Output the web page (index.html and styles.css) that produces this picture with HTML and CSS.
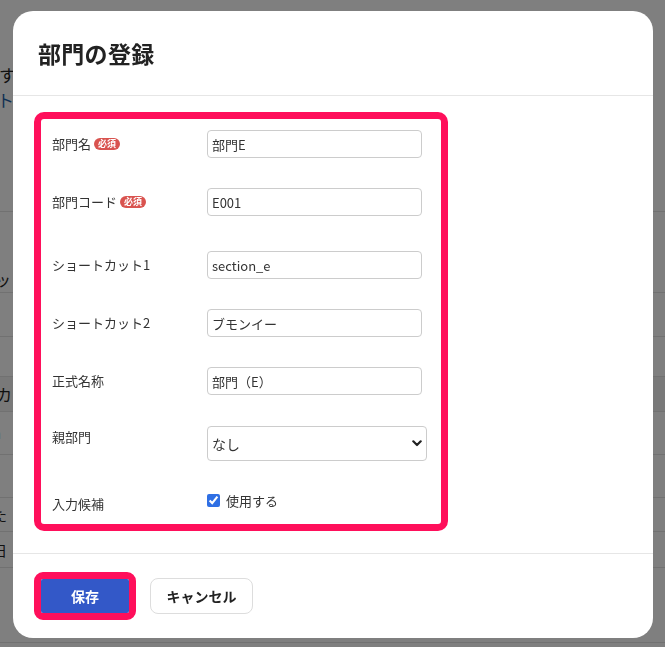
FILE: index.html
```html
<!DOCTYPE html>
<html lang="ja">
<head>
<meta charset="utf-8">
<title>部門の登録</title>
<link rel="stylesheet" href="styles.css">
</head>
<body>
<div class="page">
  <div class="pg-top">
    <p class="pg-text pg-t1">す</p>
    <p class="pg-text pg-link">ト</p>
  </div>
  <div class="pg-row pg-r1"><span class="pg-cell">ット</span></div>
  <div class="pg-row pg-r2"></div>
  <div class="pg-row pg-r3"></div>
  <div class="pg-row pg-head"><span class="pg-cell">カ</span></div>
  <div class="pg-row pg-r4"><span class="pg-cell pg-small">a</span></div>
  <div class="pg-row pg-r5"></div>
  <div class="pg-row pg-r6"><span class="pg-cell pg-small">た</span></div>
  <div class="pg-row pg-r7"><span class="pg-cell pg-small">日</span></div>
  <div class="pg-row pg-r8"></div>
</div>

<div class="overlay">
  <div class="modal">
    <div class="modal-header">
      <h1 class="modal-title">部門の登録</h1>
    </div>
    <div class="modal-body">
      <div class="highlight">
        <div class="row row-1">
          <div class="label">部門名<span class="badge">必須</span></div>
          <input class="input" type="text" value="部門E">
        </div>
        <div class="row row-2">
          <div class="label">部門コード<span class="badge">必須</span></div>
          <input class="input" type="text" value="E001">
        </div>
        <div class="row row-3">
          <div class="label">ショートカット1</div>
          <input class="input" type="text" value="section_e">
        </div>
        <div class="row row-4">
          <div class="label">ショートカット2</div>
          <input class="input" type="text" value="ブモンイー">
        </div>
        <div class="row row-5">
          <div class="label">正式名称</div>
          <input class="input" type="text" value="部門（E）">
        </div>
        <div class="row row-select">
          <div class="label label-select">親部門</div>
          <div class="select-wrap">
            <select class="select">
              <option>なし</option>
            </select>
            <svg class="chevron" width="10" height="7" viewBox="0 0 10 7" aria-hidden="true">
              <path d="M1.3 1.3 L5 5 L8.7 1.3" fill="none" stroke="#222" stroke-width="2.2" stroke-linecap="round" stroke-linejoin="round"/>
            </svg>
          </div>
        </div>
        <div class="row row-check">
          <div class="label label-check">入力候補</div>
          <label class="check">
            <input class="checkbox" type="checkbox" checked>
            <span>使用する</span>
          </label>
        </div>
      </div>
    </div>
    <div class="modal-footer">
      <div class="save-ring">
        <button class="btn-save" type="button">保存</button>
      </div>
      <button class="btn-cancel" type="button">キャンセル</button>
    </div>
  </div>
</div>
</body>
</html>
```

FILE: styles.css
```css
* {
  box-sizing: border-box;
}

html, body {
  margin: 0;
  padding: 0;
  background: #ffffff;
  font-family: "Noto Sans CJK JP", "Noto Sans", "Liberation Sans", sans-serif;
  color: #333333;
}

/* ---------- page behind the overlay ---------- */
.page {
  width: 665px;
  height: 647px;
  overflow: hidden;
}

.pg-top {
  height: 212px;
  padding-top: 62px;
  border-bottom: 1px solid #e2e2e2;
}

.pg-text {
  margin: 0;
  font-size: 17px;
  line-height: 25px;
  margin-left: -1px;
  color: #222222;
}

.pg-link {
  color: #1d5fa8;
  margin-left: -3px;
}

.pg-row {
  border-bottom: 1px solid #e2e2e2;
  display: flex;
  align-items: flex-end;
}

.pg-cell {
  font-size: 16px;
  line-height: 22px;
  color: #222222;
  margin-left: -5px;
}

.pg-small {
  font-size: 14px;
  margin-left: -7px;
  align-self: center;
}

.pg-r1 { height: 81px; padding-bottom: 2px; }
.pg-r2 { height: 44px; }
.pg-r3 { height: 40px; }
.pg-head { height: 35px; background: #f2f2f2; align-items: center; }
.pg-head .pg-cell { margin-left: -4px; }
.pg-r4 { height: 43px; }
.pg-r5 { height: 43px; }
.pg-r6 { height: 34px; }
.pg-r7 { height: 36px; }
.pg-r8 { height: 75px; }

/* ---------- overlay + modal ---------- */
.overlay {
  position: fixed;
  inset: 0;
  background: rgba(0, 0, 0, 0.5);
  padding: 11px 12px 9px 13px;
  display: flex;
}

.modal {
  flex: 1;
  background: #ffffff;
  border-radius: 20px;
  display: flex;
  flex-direction: column;
  overflow: hidden;
}

.modal-header {
  height: 85px;
  padding-left: 25px;
  display: flex;
  align-items: center;
  border-bottom: 1px solid #e6e6e6;
}

.modal-title {
  margin: 0;
  font-size: 23px;
  font-weight: 700;
  color: #222222;
  letter-spacing: 0.3px;
  line-height: 32px;
}

.modal-body {
  padding: 16px 0 22px 21px;
  border-bottom: 1px solid #e6e6e6;
}

.highlight {
  width: 414px;
  border: 7px solid #ff0f5b;
  border-radius: 10px;
  padding: 11px 15px 10px 11px;
}

.row {
  display: flex;
  align-items: center;
}

.row-1 { margin-top: 0; }
.row-2 { margin-top: 30px; }
.row-3 { margin-top: 35px; }
.row-4 { margin-top: 30px; }
.row-5 { margin-top: 30px; }
.row-select { margin-top: 31px; align-items: flex-start; }
.row-check { margin-top: 29px; align-items: flex-start; }

.label {
  width: 155px;
  flex: none;
  font-size: 13px;
  line-height: 20px;
  color: #333333;
  display: flex;
  align-items: center;
}

.label-select {
  margin-top: 1px;
}

.label-check {
  margin-top: 4px;
}

.badge {
  display: inline-block;
  margin-left: 3px;
  height: 12px;
  padding: 0 4px;
  border-radius: 6px;
  background: #d9534f;
  color: #ffffff;
  font-size: 9px;
  font-weight: 700;
  line-height: 12px;
}

.input {
  width: 215px;
  height: 28px;
  margin: 0;
  border: 1px solid #cccccc;
  border-radius: 4px;
  padding: 0 4px;
  font-family: inherit;
  font-size: 13px;
  color: #333333;
  background: #ffffff;
  outline: none;
}

.select-wrap {
  position: relative;
  width: 220px;
  height: 35px;
}

.select {
  appearance: none;
  -webkit-appearance: none;
  width: 220px;
  height: 35px;
  margin: 0;
  border: 1px solid #cccccc;
  border-radius: 4px;
  padding: 0 4px;
  font-family: inherit;
  font-size: 14px;
  color: #333333;
  background: #ffffff;
}

.chevron {
  position: absolute;
  right: 5px;
  top: 14px;
}

.check {
  display: flex;
  align-items: center;
  height: 20px;
  font-size: 13px;
  color: #333333;
}

.checkbox {
  width: 13px;
  height: 13px;
  margin: 0 6px 0 0;
  accent-color: #2f6fe4;
}

/* ---------- footer ---------- */
.modal-footer {
  padding: 18px 21px;
  display: flex;
  align-items: center;
  gap: 14px;
}

.save-ring {
  border: 7px solid #ff0f5b;
  border-radius: 9px;
  display: flex;
}

.btn-save {
  width: 88px;
  height: 34px;
  margin: 0;
  border: none;
  border-radius: 2px;
  background: #3358c8;
  color: #ffffff;
  font-family: inherit;
  font-size: 14px;
  font-weight: 700;
}

.btn-cancel {
  width: 103px;
  height: 36px;
  margin: 0;
  border: 1px solid #dddddd;
  border-radius: 8px;
  background: #ffffff;
  color: #222222;
  font-family: inherit;
  font-size: 14px;
  font-weight: 700;
}
```
